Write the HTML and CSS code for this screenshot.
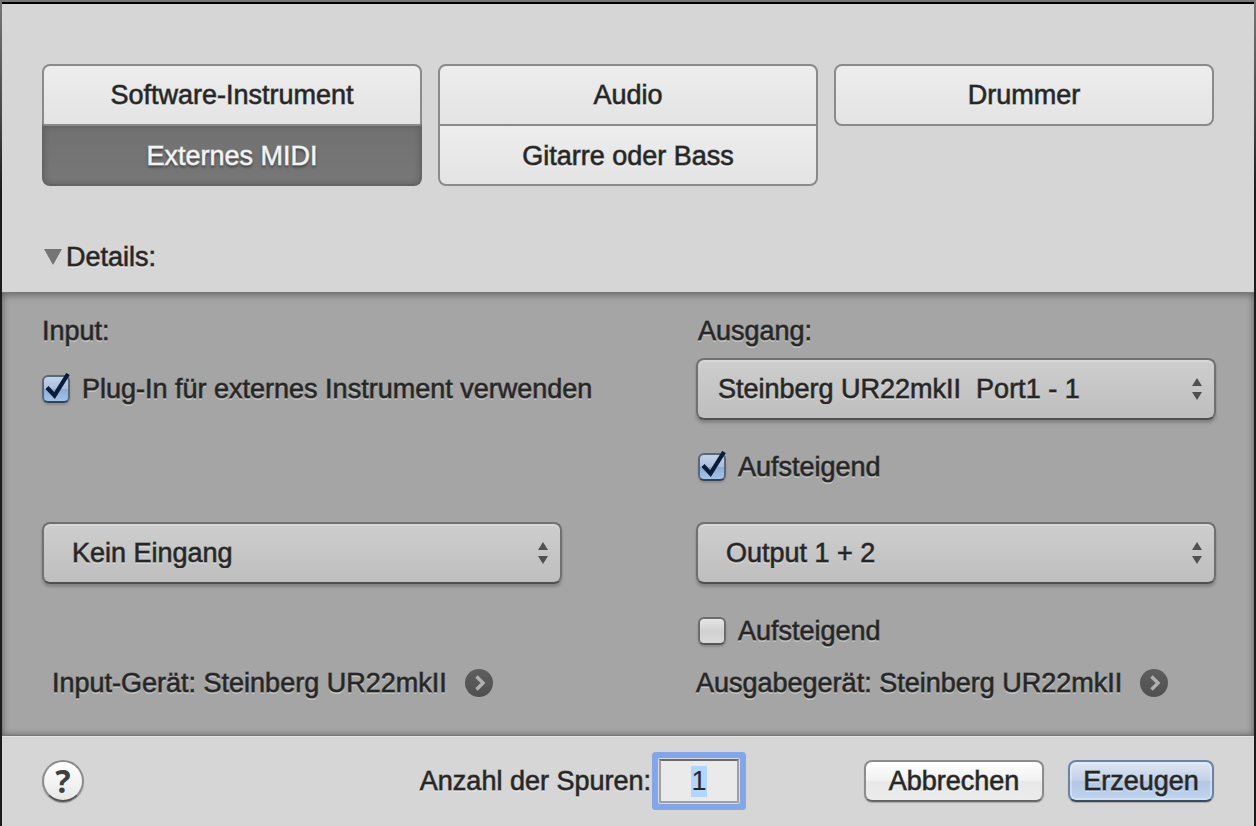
FILE: index.html
```html
<!DOCTYPE html>
<html lang="de">

<head>
    <meta charset="UTF-8">
    <meta name="viewport" content="width=device-width, initial-scale=1">
    <title>Neue Spur</title>
    <link rel="stylesheet" href="styles.css">
</head>

<body>

    <form class="dialog">
        <section class="top">
            <div class="types">
                <div class="type-group">
                    <button type="button" class="type">Software-Instrument</button>
                    <button type="button" class="type active">Externes MIDI</button>
                </div>
                <div class="type-group">
                    <button type="button" class="type">Audio</button>
                    <button type="button" class="type">Gitarre oder Bass</button>
                </div>
                <div class="type-group">
                    <button type="button" class="type">Drummer</button>
                </div>
            </div>

            <button type="button" class="toggle" aria-expanded="true">
                <svg width="18" height="16" viewBox="0 0 18 16"><path d="M0 0h18L9 16z" fill="#757575"/></svg>
                Details:
            </button>
        </section>

        <section class="details">
            <h2 class="heading">Input:</h2>
            <h2 class="heading indent">Ausgang:</h2>

            <label class="check tall">
                <span class="box">
                    <input type="checkbox" checked>
                    <svg class="tick" width="28" height="30" viewBox="0 0 28 30"><path d="M5 14.5l7.5 8L26 1" fill="none" stroke="#0a1c3c" stroke-width="4.2"/></svg>
                </span>
                Plug-In für externes Instrument verwenden
            </label>
            <div class="popup">
                <select class="near" aria-label="Ausgang">
                    <option>Steinberg UR22mkII&nbsp; Port1 - 1</option>
                </select>
                <svg class="arrows" width="10" height="22" viewBox="0 0 10 22"><path d="M5 0l5 8H0zM0 14h10l-5 8z" fill="#505050"/></svg>
            </div>

            <label class="check indent second">
                <span class="box">
                    <input type="checkbox" checked>
                    <svg class="tick" width="28" height="30" viewBox="0 0 28 30"><path d="M5 14.5l7.5 8L26 1" fill="none" stroke="#0a1c3c" stroke-width="4.2"/></svg>
                </span>
                Aufsteigend
            </label>

            <div class="popup">
                <select aria-label="Input">
                    <option>Kein Eingang</option>
                </select>
                <svg class="arrows" width="10" height="22" viewBox="0 0 10 22"><path d="M5 0l5 8H0zM0 14h10l-5 8z" fill="#505050"/></svg>
            </div>
            <div class="popup">
                <select aria-label="Output">
                    <option>Output 1 + 2</option>
                </select>
                <svg class="arrows" width="10" height="22" viewBox="0 0 10 22"><path d="M5 0l5 8H0zM0 14h10l-5 8z" fill="#505050"/></svg>
            </div>

            <label class="check indent second">
                <span class="box"><input type="checkbox"></span>
                Aufsteigend
            </label>

            <div class="device inset">
                <span>Input-Gerät: Steinberg UR22mkII</span>
                <button type="button" class="go" aria-label="Input-Gerät öffnen">
                    <svg width="28" height="28" viewBox="0 0 28 28"><path d="M11.5 7.5l6.5 6.5-6.5 6.5" fill="none" stroke="#b0b0b0" stroke-width="3.4"/></svg>
                </button>
            </div>
            <div class="device">
                <span>Ausgabegerät: Steinberg UR22mkII</span>
                <button type="button" class="go" aria-label="Ausgabegerät öffnen">
                    <svg width="28" height="28" viewBox="0 0 28 28"><path d="M11.5 7.5l6.5 6.5-6.5 6.5" fill="none" stroke="#b0b0b0" stroke-width="3.4"/></svg>
                </button>
            </div>
        </section>

        <footer class="bottom">
            <button type="button" class="help">?</button>
            <label for="anzahl">Anzahl der Spuren:</label>
            <input class="count" id="anzahl" type="text" value="1">
            <button type="button" class="btn">Abbrechen</button>
            <button type="submit" class="btn primary">Erzeugen</button>
        </footer>
    </form>

    <script src="script.js"></script>
</body>

</html>
```
FILE: styles.css
```css
* {
    box-sizing: border-box;
}

body {
    margin: 0;
    min-height: 100vh;
    padding: 0 2px;
    background: linear-gradient(#777 0, #444 120px, #1c1c1c 190px);
    font-family: "Liberation Sans", Arial, sans-serif;
    font-size: 27px;
    line-height: 30px;
    color: #262626;
    -webkit-text-stroke: 1px rgba(38, 38, 38, .6);
}

button,
select,
input {
    margin: 0;
    padding: 0;
    font: inherit;
    color: inherit;
}

.dialog,
.dialog button,
.dialog select {
    text-shadow: 0 2px 0 rgba(255, 255, 255, .35);
}

.dialog {
    display: flex;
    flex-direction: column;
    min-height: 100vh;
    border-top: 2px solid #777;
    background-color: #d6d6d6;
}

.top {
    padding: 60px 40px 20px;
    border-top: 2px solid #000;
}

.types {
    display: grid;
    grid-template-columns: repeat(3, 1fr);
    align-items: start;
    gap: 16px;
}

.type-group {
    display: flex;
    flex-direction: column;
}

.type {
    height: 62px;
    border: 2px solid #8a8a8a;
    background: linear-gradient(#ededed, #e4e4e4);
}

.type:first-child {
    border-radius: 8px 8px 0 0;
}

.type:last-child {
    border-radius: 0 0 8px 8px;
}

.type:only-child {
    border-radius: 8px;
}

.type + .type {
    margin-top: -2px;
    padding-top: 2px;
}

.dialog .type.active {
    border-color: #8a8a8a #646464 #646464;
    background: linear-gradient(#717171, #777);
    box-shadow: inset 0 0 6px rgba(0, 0, 0, .2);
    color: #f4f4f4;
    text-shadow: 0 2px 3px rgba(0, 0, 0, .6);
    -webkit-text-stroke-color: rgba(244, 244, 244, .6);
}

.toggle {
    display: flex;
    align-items: center;
    gap: 4px;
    margin-top: 56px;
    padding-left: 2px;
    border: none;
    background: none;
}

.details {
    display: grid;
    grid-template-columns: repeat(2, minmax(0, 1fr));
    column-gap: 134px;
    align-items: start;
    padding: 23px 38px 37px 40px;
    background-color: #a5a5a5;
    border-top: 1px solid #777;
    border-bottom: 1px solid #777;
    box-shadow: inset 0 2px 8px rgba(0, 0, 0, .25), inset 0 0 6px rgba(0, 0, 0, .25);
}

.heading {
    margin: 0 0 12px;
    font-size: 27px;
    font-weight: normal;
}

.indent {
    padding-left: 2px;
}

.inset {
    padding-left: 10px;
}

.second {
    grid-column: 2;
    margin-bottom: 40px;
}

.device {
    display: flex;
    align-items: center;
    gap: 18px;
    margin-top: -18px;
}

.check {
    display: flex;
    align-items: center;
    gap: 12px;
    white-space: nowrap;
}

.tall {
    height: 62px;
}

.box {
    position: relative;
    width: 28px;
    height: 28px;
}

.box input {
    display: block;
    appearance: none;
    width: 28px;
    height: 28px;
    border: 2px solid #6c6c6c;
    border-bottom-color: #555;
    border-radius: 6px;
    background: linear-gradient(#e6e6e6, #d0d0d0 50%, #dadada);
    box-shadow: 0 2px 2px rgba(0, 0, 0, .15);
}

.box input:checked {
    border-color: #58677e;
    border-bottom-color: #344258;
    background: linear-gradient(#c4d3e8, #a9bddb 50%, #8eaad2 50%, #a5c3e8);
}

.tick {
    position: absolute;
    left: 0;
    top: -2px;
    pointer-events: none;
}

.popup {
    position: relative;
    margin-bottom: 32px;
}

.popup select {
    display: block;
    appearance: none;
    width: 100%;
    height: 62px;
    padding: 0 40px 0 28px;
    border: 2px solid #707070;
    border-bottom-color: #505050;
    border-radius: 8px;
    background: linear-gradient(#cecece, #bebebe);
    box-shadow: inset 0 2px 0 rgba(255, 255, 255, .2), 0 3px 3px rgba(0, 0, 0, .2);
}

.popup .near {
    padding-left: 20px;
}

.arrows {
    position: absolute;
    right: 14px;
    top: 20px;
    pointer-events: none;
}

.go {
    width: 28px;
    height: 28px;
    border: none;
    border-radius: 50%;
    background: linear-gradient(#5e5e5e, #505050);
}

.go svg {
    display: block;
}

.bottom {
    display: flex;
    align-items: center;
    padding: 22px 40px;
    border-top: 1px solid #e2e2e2;
}

.dialog .help {
    width: 42px;
    height: 42px;
    margin-right: auto;
    border: 2px solid #8c8c8c;
    border-bottom-color: #555;
    border-radius: 50%;
    background: linear-gradient(#fff, #e8e8e8);
    box-shadow: 0 1px 1px rgba(0, 0, 0, .3);
    font-family: "Noto Sans", sans-serif;
    font-size: 32px;
    font-weight: bold;
    color: #404040;
    text-shadow: none;
    -webkit-text-stroke: 0;
}

.count {
    width: 80px;
    height: 44px;
    margin: 0 125px 0 8px;
    border: 2px solid #a0a0a0;
    border-top-color: #6a6a6a;
    outline: none;
    background-color: #eaeaea;
    text-align: center;
}

.count:focus {
    box-shadow: 0 0 0 1px #d8dce6, 0 0 0 7px #82a6e8;
    border-radius: 1px;
}

.count::selection {
    background-color: #b2d7fe;
    color: #262626;
}

.btn {
    height: 42px;
    width: 180px;
    border: 2px solid #8c8c8c;
    border-bottom-color: #666;
    border-radius: 8px;
    background: linear-gradient(#fff, #f1f1f1 50%, #e8e8e8 50%, #ececec);
    box-shadow: 0 1px 1px rgba(0, 0, 0, .2);
}

.primary {
    width: 146px;
    margin-left: 24px;
    border-color: #6c83a5;
    border-bottom-color: #3c4a62;
    background: linear-gradient(#dde6f3, #c3d1e7 50%, #b3c6e3 50%, #c0d5f0);
    box-shadow: inset 0 0 0 2px rgba(225, 238, 255, .5), 0 1px 1px rgba(0, 0, 0, .2);
}
```
FILE: script.js
```js
const anzahl = document.querySelector("#anzahl");
anzahl.focus();
anzahl.select();
```
